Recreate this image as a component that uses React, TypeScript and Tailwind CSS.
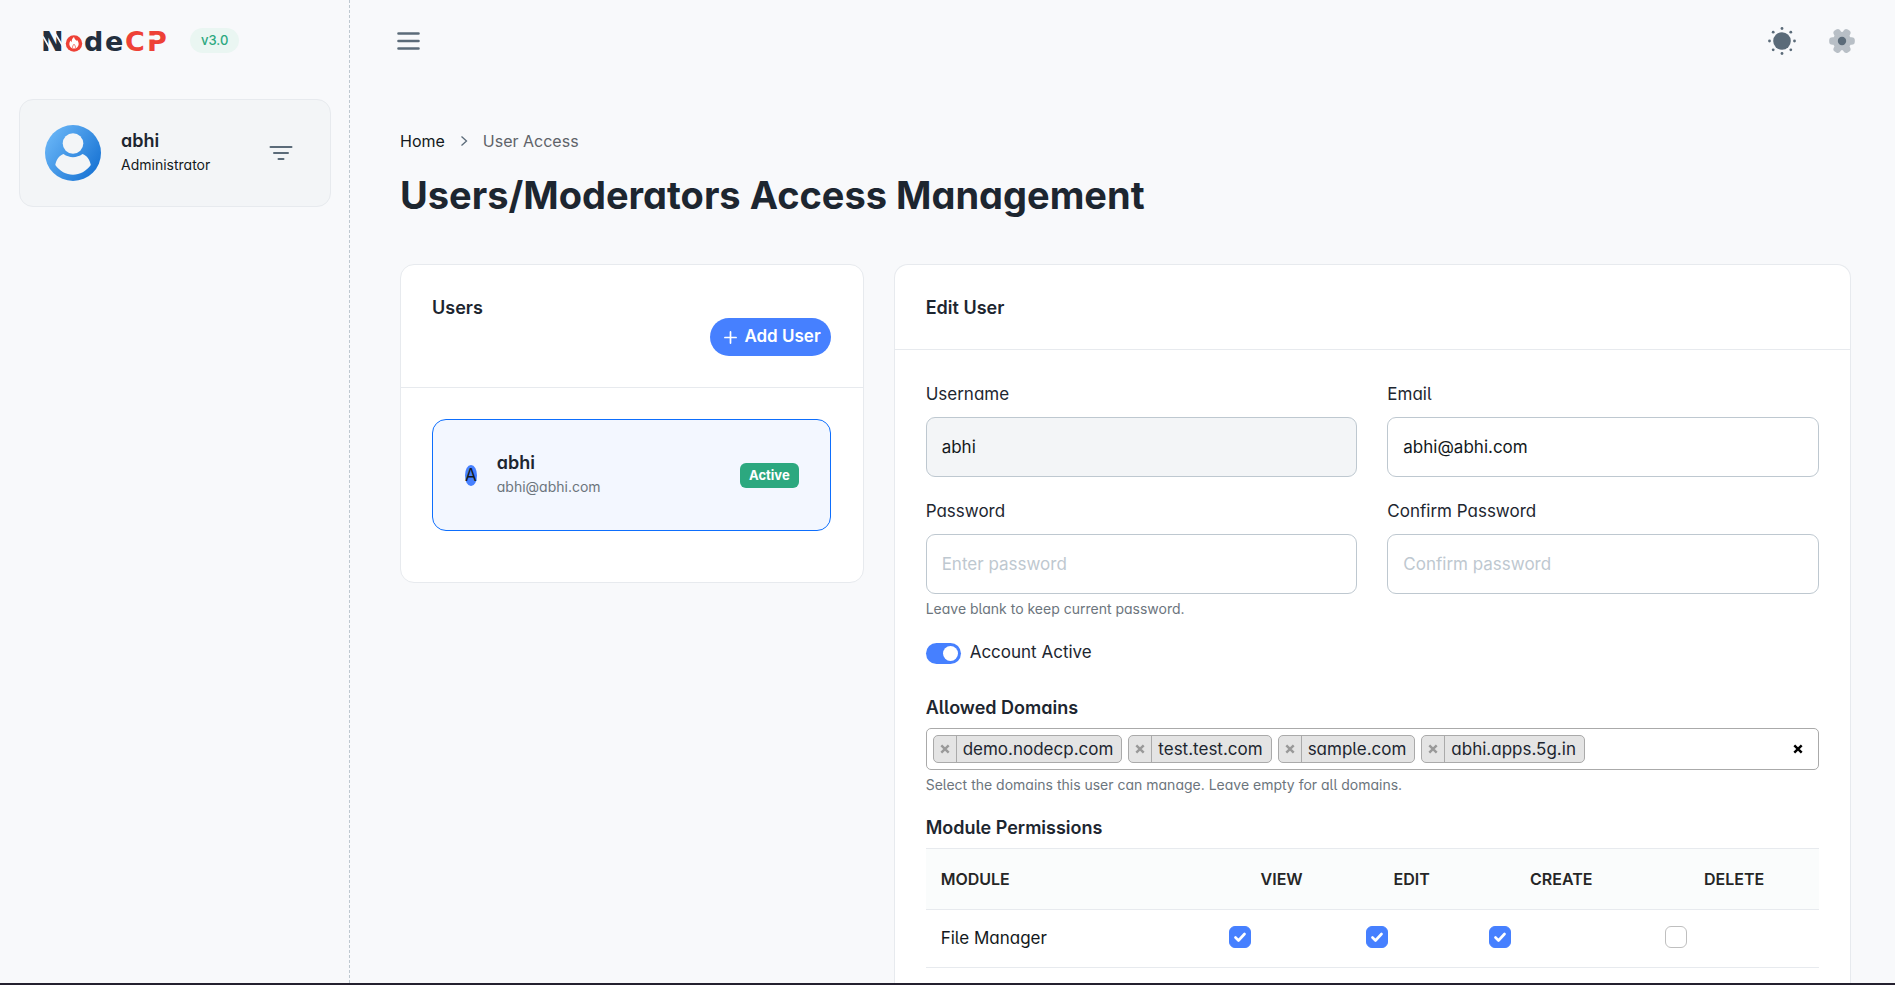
import { ReactNode } from "react";

const domains = ["demo.nodecp.com", "test.test.com", "sample.com", "abhi.apps.5g.in"];
const actions = ["View", "Edit", "Create", "Delete"];
const modules = [{ name: "File Manager", granted: ["View", "Edit", "Create"] }];

function Logo() {
  return (
    <svg width="133" height="38" viewBox="-4 -7 133 38" role="img" aria-label="NodeCP" className="-mx-1 font-['DejaVu_Sans',sans-serif] text-[27px] font-bold">
      <text x="-2" y="22" fill="#232f3e">N</text>
      <path d="M0 7.500L9.500 24M9.500 0L20 17.500" stroke="#f8f9fb" strokeWidth="1.600" />
      <circle cx="31" cy="14.500" r="8.200" fill="#ee4136" />
      <path
        d="M31 8c.4 2 1.700 2.600 2.500 4 .3-.5.4-.9.4-1.300 1.400 1.500 2 3.200 1.700 5-.4 2.400-2.200 3.900-4.600 3.900s-4.200-1.500-4.600-3.900c-.2-1.700.4-3 1.400-4.100.1.700.3 1.200.8 1.600-.1-2.200.8-4 2.400-5.200z"
        fill="#fff"
      />
      <path d="M29.800 19.500c-.8-1.800.2-3 1.200-4.300 1 1.300 2 2.500 1.200 4.300" fill="none" stroke="#ee4136" strokeWidth=".7" />
      <text x="41" y="22" fill="#232f3e">d</text>
      <text x="62" y="22" fill="#232f3e">e</text>
      <text x="82" y="22" fill="#ee4136">C</text>
      <text x="104" y="22" fill="#ee4136">P</text>
      <path d="M105 8.500h8" stroke="#f8f9fb" strokeWidth="4" />
    </svg>
  );
}

function Avatar() {
  return (
    <svg width="56" height="56" viewBox="0 0 56 56" role="img" aria-label="Profile picture">
      <defs>
        <linearGradient id="avatar" x1="0" y1="0.15" x2="1" y2="0.85">
          <stop offset="0" stopColor="#6cb8f8" />
          <stop offset="1" stopColor="#1470d2" />
        </linearGradient>
      </defs>
      <circle cx="28" cy="28" r="28" fill="url(#avatar)" />
      <circle cx="28" cy="18.500" r="10.300" fill="#f3f5f7" />
      <path d="M18.500 29c6 4.200 13 4.200 19 0 4.500 1.500 7.500 6 8.300 11-4.500 6-11 9.800-17.800 9.800S14.700 46 10.300 40c.8-5 3.700-9.500 8.200-11z" fill="#f3f5f7" />
    </svg>
  );
}

function Cross({ size }: { size: number }) {
  return (
    <svg width={size} height={size} viewBox="0 0 10 10" aria-hidden="true">
      <path d="M1.300 1.300l7.400 7.400M8.700 1.300L1.300 8.700" stroke="currentColor" strokeWidth="2.400" />
    </svg>
  );
}

function Sidebar() {
  return (
    <aside className="w-[350px] shrink-0 border-r border-dashed border-[#bec8d0] pl-[19px] pr-[18px]">
      <div className="flex h-[81px] items-center gap-[22px] pl-6">
        <Logo />
        <span className="rounded-full bg-[#eaf6f2] px-[11px] text-[13px] font-medium leading-[25px] text-[#2ca87f]">v3.0</span>
      </div>
      <div className="mt-[18px] flex items-center rounded-[14px] border border-[#e7eaee] bg-[#f3f5f7] p-[25px]">
        <Avatar />
        <div className="ml-5 flex-1">
          <p className="text-[18px] font-semibold leading-6 text-[#1d2630]">abhi</p>
          <p className="text-[14px] leading-6 text-[#131920]">Administrator</p>
        </div>
        <button type="button" aria-label="Account menu" className="p-[12px] text-[#5b6b79]">
          <svg width="24" height="16" viewBox="0 0 24 16" fill="none" stroke="currentColor" strokeWidth="2" strokeLinecap="round">
            <path d="M1.500 2h21M5 8h14M9.500 14h5" />
          </svg>
        </button>
      </div>
    </aside>
  );
}

const lobes = [0, 60, 120, 180, 240, 300];

function Gear() {
  return (
    <svg width="26" height="26" viewBox="0 0 26 26" aria-hidden="true">
      <g opacity=".4" fill="#5b6b79">
        <circle cx="13" cy="13" r="9.200" />
        {lobes.map((angle) => (
          <rect key={angle} x="17" y="9.200" width="8.800" height="7.600" rx="3.200" transform={`rotate(${angle} 13 13)`} />
        ))}
      </g>
      <circle cx="13" cy="13" r="4.200" fill="#5b6b79" />
    </svg>
  );
}

function Sun() {
  return (
    <svg width="28" height="28" viewBox="0 0 28 28" fill="#5b6b79" aria-hidden="true">
      <circle cx="14" cy="14" r="8.800" />
      <circle cx="14" cy="1.500" r="1.400" />
      <circle cx="14" cy="26.500" r="1.400" />
      <circle cx="1.500" cy="14" r="1.400" />
      <circle cx="26.500" cy="14" r="1.400" />
      <circle cx="5.200" cy="5.200" r="1.400" />
      <circle cx="22.800" cy="5.200" r="1.400" />
      <circle cx="5.200" cy="22.800" r="1.400" />
      <circle cx="22.800" cy="22.800" r="1.400" />
    </svg>
  );
}

function TopBar() {
  return (
    <header className="flex h-[81px] items-center pl-[46px] pr-10">
      <button type="button" aria-label="Toggle sidebar" className="text-[#5b6b79]">
        <svg width="25" height="20" viewBox="0 0 25 20" fill="none" stroke="currentColor" strokeWidth="2.600" strokeLinecap="round">
          <path d="M2.500 2.500h20M2.500 10h20M2.500 17.500h20" />
        </svg>
      </button>
      <div className="ml-auto flex items-center gap-[33px]">
        <button type="button" aria-label="Theme"><Sun /></button>
        <button type="button" aria-label="Settings"><Gear /></button>
      </div>
    </header>
  );
}

function UsersCard() {
  return (
    <section className="rounded-[14px] border border-[#e7eaee] bg-white">
      <div className="border-b border-[#e7eaee] pb-[31px] pl-[31px] pr-8 pt-[33px]">
        <h2 className="text-[18px] font-semibold leading-[20px] text-[#1d2630]">Users</h2>
        <div className="flex justify-end">
          <button type="button" className="flex h-[38px] items-center gap-[7px] rounded-full bg-[#4680ff] pl-[14px] pr-[10px] text-[17px] font-semibold text-white [font-feature-settings:normal]">
            <svg width="13" height="13" viewBox="0 0 13 13" stroke="currentColor" strokeWidth="1.700" strokeLinecap="round" aria-hidden="true">
              <path d="M6.500 .9v11.200M.9 6.500h11.200" />
            </svg>
            Add User
          </button>
        </div>
      </div>
      <div className="pb-[51px] pl-[31px] pr-8 pt-[31px]">
        <a href="#abhi" className="flex h-[112px] items-center rounded-[14px] border border-[#0d6efd] bg-[#f3f7ff] pl-8 pr-[31px]">
          <span className="rounded-[50%] bg-[#4680ff] text-[17px] leading-[21px] text-[#131920]">A</span>
          <span className="ml-5 flex flex-1 flex-col">
            <span className="text-[18px] font-semibold leading-[24px] text-[#1d2630]">abhi</span>
            <span className="text-[14px] leading-6 text-[#6c757d]">abhi@abhi.com</span>
          </span>
          <span className="rounded-[6px] bg-[#2ca87f] px-[9px] text-[13px] font-bold leading-[25px] text-white">Active</span>
        </a>
      </div>
    </section>
  );
}

type FieldProps = {
  id: string;
  label: string;
  type: string;
  value?: string;
  placeholder?: string;
  disabled?: boolean;
  children?: ReactNode;
};

function Field({ id, label, type, value, placeholder, disabled, children }: FieldProps) {
  return (
    <div>
      <label htmlFor={id} className="mb-[10px] block text-[17px] leading-[26px] text-[#1d2630]">{label}</label>
      <input
        id={id}
        type={type}
        defaultValue={value}
        placeholder={placeholder}
        disabled={disabled}
        className="block h-[60px] w-full rounded-[9px] border border-[#bec8d0] bg-white px-[15px] text-[17px] text-[#131920] [font-feature-settings:normal] placeholder:text-[#bec8d0] disabled:bg-[#f3f5f7]"
      />
      {children}
    </div>
  );
}

function Tick({ label, checked }: { label: string; checked: boolean }) {
  return (
    <label className="relative block size-[22px]">
      <input
        type="checkbox"
        aria-label={label}
        defaultChecked={checked}
        className="peer block size-[22px] appearance-none rounded-[6px] border border-[#bfbfbf] bg-white checked:border-[#4680ff] checked:bg-[#4680ff]"
      />
      <svg className="pointer-events-none absolute left-[5px] top-[5px] opacity-0 peer-checked:opacity-100" width="12" height="12" viewBox="0 0 12 12" fill="none" stroke="#fff" strokeWidth="2.600" strokeLinecap="round" strokeLinejoin="round">
        <path d="M1.500 6.500l3 3 6-6.500" />
      </svg>
    </label>
  );
}

function Permissions() {
  return (
    <table className="w-full table-fixed border-y border-[#e7eaee]">
      <colgroup>
        <col className="w-[32.2%]" />
        <col className="w-[15.3%]" />
        <col className="w-[13.8%]" />
        <col className="w-[19.7%]" />
        <col className="w-[19%]" />
      </colgroup>
      <thead>
        <tr className="h-[61px] border-b border-[#e7eaee] bg-[#fafcfc] text-[16px] uppercase text-[#262626]">
          <th scope="col" className="px-[15px] text-left font-semibold">Module</th>
          {actions.map((action) => (
            <th key={action} scope="col" className="text-center font-semibold">{action}</th>
          ))}
        </tr>
      </thead>
      <tbody>
        {modules.map((module) => (
          <tr key={module.name} className="h-[58px] border-b border-[#e7eaee] align-top">
            <td className="px-[15px] pt-4 text-[17px] leading-6 text-[#131920]">{module.name}</td>
            {actions.map((action) => (
              <td key={action} className="px-4 pt-4">
                <Tick label={`${module.name}: ${action}`} checked={module.granted.includes(action)} />
              </td>
            ))}
          </tr>
        ))}
      </tbody>
    </table>
  );
}

function EditCard() {
  return (
    <section className="col-span-2 rounded-t-[14px] border border-b-0 border-[#e7eaee] bg-white">
      <div className="border-b border-[#e7eaee] px-[31px] pb-[31px] pt-[33px]">
        <h2 className="text-[18px] font-semibold leading-[20px] text-[#1d2630]">Edit User</h2>
      </div>
      <form className="px-[31px] pt-[31px]">
        <div className="grid grid-cols-2 gap-x-[30px] gap-y-[21px]">
          <Field id="username" label="Username" type="text" value="abhi" disabled />
          <Field id="email" label="Email" type="email" value="abhi@abhi.com" />
          <Field id="password" label="Password" type="password" placeholder="Enter password">
            <p className="mt-[4px] text-[14px] leading-[21px] text-[#6c757d]">Leave blank to keep current password.</p>
          </Field>
          <Field id="confirm" label="Confirm Password" type="password" placeholder="Confirm password" />
        </div>
        <label className="mt-[22px] flex h-6 items-center gap-[9px] text-[17px] text-[#1d2630]">
          <span className="relative block h-[21px] w-[35px]">
            <input type="checkbox" role="switch" defaultChecked className="peer block h-[21px] w-[35px] appearance-none rounded-full bg-[#bec8d0] checked:bg-[#4680ff]" />
            <span className="pointer-events-none absolute left-[3px] top-[3px] size-[15px] rounded-full bg-white peer-checked:left-[17px]" />
          </span>
          Account Active
        </label>
        <h3 id="domains" className="mt-[31px] text-[18px] font-semibold leading-[24px] text-[#1d2630]">Allowed Domains</h3>
        <div role="group" aria-labelledby="domains" className="mt-2 flex items-center rounded-[5px] border border-[#aaaaaa] bg-white py-[6px] pl-[6px] pr-[15px]">
          <ul className="flex flex-1 flex-wrap gap-[6px]">
            {domains.map((domain) => (
              <li key={domain} className="flex h-[28px] items-stretch rounded-[5px] border border-[#aaaaaa] bg-[#e4e4e4] text-[#1d2630]">
                <button type="button" aria-label={`Remove ${domain}`} className="flex w-[23px] items-center justify-center border-r border-[#aaaaaa] text-[#999999]">
                  <Cross size={10} />
                </button>
                <span className="pl-[6px] pr-2 text-[17px] leading-[26px]">{domain}</span>
              </li>
            ))}
          </ul>
          <button type="button" aria-label="Remove all domains" className="text-black">
            <Cross size={10} />
          </button>
        </div>
        <p className="mt-[4px] text-[14px] leading-[21px] text-[#6c757d]">Select the domains this user can manage. Leave empty for all domains.</p>
        <h3 className="mb-[8px] mt-[21px] text-[18px] font-semibold leading-[24px] text-[#1d2630]">Module Permissions</h3>
        <Permissions />
      </form>
    </section>
  );
}

export default function App() {
  return (
    <div className="flex h-screen flex-col bg-[#f8f9fb] font-['Inter',sans-serif] text-[#131920] [font-feature-settings:'cv11','cv05']">
      <div className="flex min-h-0 flex-1">
        <Sidebar />
        <div className="flex min-w-0 flex-1 flex-col">
          <TopBar />
          <main className="flex flex-1 flex-col overflow-y-auto pl-[50px] pr-[44px] pt-[48px] [scrollbar-width:none]">
            <nav aria-label="Breadcrumb" className="flex items-center text-[16px] leading-6">
              <a href="#home">Home</a>
              <svg className="mx-[15px]" width="8" height="12" viewBox="0 0 8 12" fill="none" stroke="#5b6b79" strokeWidth="1.300" aria-hidden="true">
                <path d="M1.500 1.500L6.500 6l-5 4.500" />
              </svg>
              <span className="text-[#5f6369]">User Access</span>
            </nav>
            <h1 className="mt-[18px] text-[38px] font-bold leading-[48px] text-[#1d2630]">Users/Moderators Access Management</h1>
            <div className="mt-[45px] grid flex-1 grid-cols-3 gap-[30px]">
              <div><UsersCard /></div>
              <EditCard />
            </div>
          </main>
        </div>
      </div>
      <div className="h-[2px] shrink-0 bg-[#24202f]" />
    </div>
  );
}
